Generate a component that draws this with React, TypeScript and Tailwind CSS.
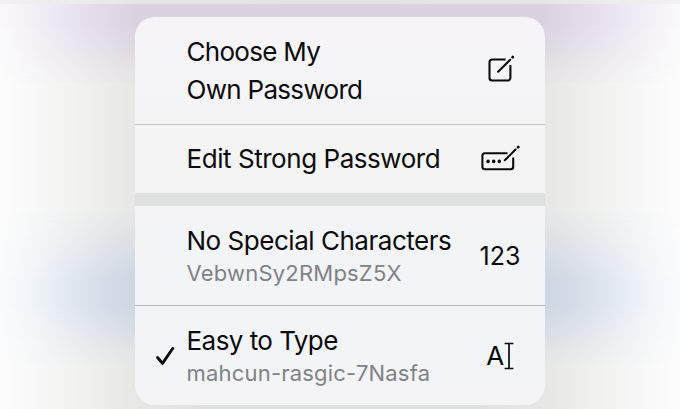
import type { ReactNode } from "react";
import clsx from "clsx";

interface MenuItemProps {
  title: ReactNode;
  subtitle?: string;
  icon: ReactNode;
  checked?: boolean;
  className?: string;
  titleClassName?: string;
  subtitleClassName?: string;
}

function ComposeIcon() {
  return (
    <svg className="mb-1" width="40" height="34" viewBox="0 0 40 34" fill="none" stroke="currentColor" strokeWidth="2.1" strokeLinecap="round" strokeLinejoin="round">
      <path d="M25.6 7.5H12.3A2.8 2.8 0 0 0 9.5 10.3v15.4a2.8 2.8 0 0 0 2.8 2.8h15.3a2.8 2.8 0 0 0 2.8-2.8V13" strokeLinecap="butt" />
      <path d="M18.1 19.7 30.2 7.8" />
      <path d="m32.6 5.2.2-.2" strokeWidth="2.7" />
    </svg>
  );
}

function PasswordFieldIcon() {
  return (
    <svg width="40" height="34" viewBox="0 0 40 34" fill="none" stroke="currentColor" strokeWidth="2.1" strokeLinecap="round" strokeLinejoin="round">
      <path d="M27.5 11.3H4.9a2.5 2.5 0 0 0-2.5 2.5v10.9a2.5 2.5 0 0 0 2.5 2.5h25.8a2.5 2.5 0 0 0 2.5-2.5V15.5" strokeLinecap="butt" />
      <path d="M24.8 18.3 35.6 7.6" />
      <path d="m38.1 5.2.2-.2" strokeWidth="2.7" />
      <path d="M8.1 19.4h.01M13.7 19.4h.01M19.3 19.4h.01" strokeWidth="3.6" />
    </svg>
  );
}

function TextCursorIcon() {
  return (
    <span className="flex items-center text-[26px] leading-[30px] tracking-[-0.5px]">
      <span>A</span>
      <svg width="10" height="28" viewBox="0 0 10 28" fill="none" stroke="currentColor">
        <path d="M.6 1.5h8.8M.6 26.5h8.8" strokeWidth="1.7" />
        <path d="M5 1.5v25" strokeWidth="2" strokeOpacity=".85" />
      </svg>
    </span>
  );
}

function CheckIcon() {
  return (
    <svg width="20" height="20" viewBox="0 0 20 20" fill="none" stroke="currentColor" strokeWidth="2.9" strokeLinecap="round" strokeLinejoin="round">
      <path d="m2.5 11.5 5 5.9L17.7 2.5" />
    </svg>
  );
}

function MenuItem({
  title,
  subtitle,
  icon,
  checked = false,
  className,
  titleClassName,
  subtitleClassName,
}: MenuItemProps) {
  return (
    <button
      type="button"
      role="menuitemradio"
      aria-checked={checked}
      className={clsx("flex w-full items-center text-left", className)}
    >
      <span className="flex w-[51.5px] shrink-0 pl-5">{checked && <CheckIcon />}</span>
      <span className="flex-1 whitespace-nowrap">
        <span className={clsx("block text-[26px]", titleClassName)}>{title}</span>
        {subtitle && (
          <span className={clsx("block text-[22px] leading-8 text-[#818286]", subtitleClassName)}>
            {subtitle}
          </span>
        )}
      </span>
      <span className="mr-[25px] flex w-10 shrink-0 justify-center">{icon}</span>
    </button>
  );
}

export default function App() {
  return (
    <main className="relative flex h-[409px] w-[680px] justify-center overflow-hidden bg-[linear-gradient(90deg,#fdfdfd_0%,#f8f8f8_5%,#f2f2f1_11%,#e8e8e7_19%,#dfe0e0_30%,#dfe0e0_70%,#e8e8e7_81%,#f2f2f1_89%,#f8f8f8_95%,#fdfdfd_100%)] pt-[17px] font-['Inter',sans-serif] text-[#0b0b0d]">
      {/* soft colour of the content behind the menu */}
      <div className="absolute inset-x-0 top-1 h-[80px] bg-[linear-gradient(90deg,#faf9fb_0%,#f1edf5_6%,#e7dfed_12%,#dbd2df_20%,#dbd2df_80%,#e7dfed_88%,#f1edf5_94%,#faf9fb_100%)] mask-[linear-gradient(180deg,#000_25%,#0009_60%,transparent)]" />
      <div className="absolute inset-x-0 top-[210px] h-[155px] bg-[linear-gradient(90deg,#fafbfd_0%,#f0f4f9_5%,#e2e8f1_10%,#d6dde8_15%,#ccd6e1_20%,#ccd6e1_80%,#d6dde8_85%,#e2e8f1_90%,#f0f4f9_95%,#fafbfd_100%)] mask-[linear-gradient(180deg,transparent,#0008_25%,#000_45%,#000_62%,#0008_80%,transparent)]" />
      <div className="absolute inset-x-0 top-0 h-1 bg-[linear-gradient(90deg,#f2f2f2,#e6e6e6_20%,#e2e2e2_50%,#e6e6e6_80%,#f2f2f2)]" />

      <div role="menu" className="relative h-[388px] w-[410px] overflow-hidden rounded-[20px]">
        <MenuItem
          className="h-[108px] border-b border-[#c6c6c9] bg-linear-to-b from-[#f6f4f9] to-[#f4f4f5]"
          titleClassName="leading-[38px] tracking-[-0.7px]"
          title={
            <>
              Choose My
              <br />
              Own Password
            </>
          }
          icon={<ComposeIcon />}
        />
        <MenuItem
          className="h-[68px] bg-[#f4f4f4]"
          titleClassName="leading-[38px] tracking-[-0.45px]"
          title="Edit Strong Password"
          icon={<PasswordFieldIcon />}
        />
        <div className="h-[13px] bg-[#dfe0e0]" />
        <MenuItem
          className="h-[100px] border-b border-[#b1b7bf] bg-linear-to-b from-[#f4f4f5] to-[#f2f4f8]"
          titleClassName="pt-px leading-[33px] tracking-[-0.47px]"
          subtitleClassName="tracking-[0.2px]"
          title="No Special Characters"
          subtitle="VebwnSy2RMpsZ5X"
          icon={<span className="pt-0.5 text-[25px]">123</span>}
        />
        <MenuItem
          className="h-[99px] bg-linear-to-b from-[#f2f4f8] to-[#f4f4f5]"
          titleClassName="pt-px leading-[33px] tracking-[-0.55px]"
          subtitleClassName="tracking-[0.2px]"
          title="Easy to Type"
          subtitle="mahcun-rasgic-7Nasfa"
          icon={<TextCursorIcon />}
          checked
        />
      </div>
    </main>
  );
}
